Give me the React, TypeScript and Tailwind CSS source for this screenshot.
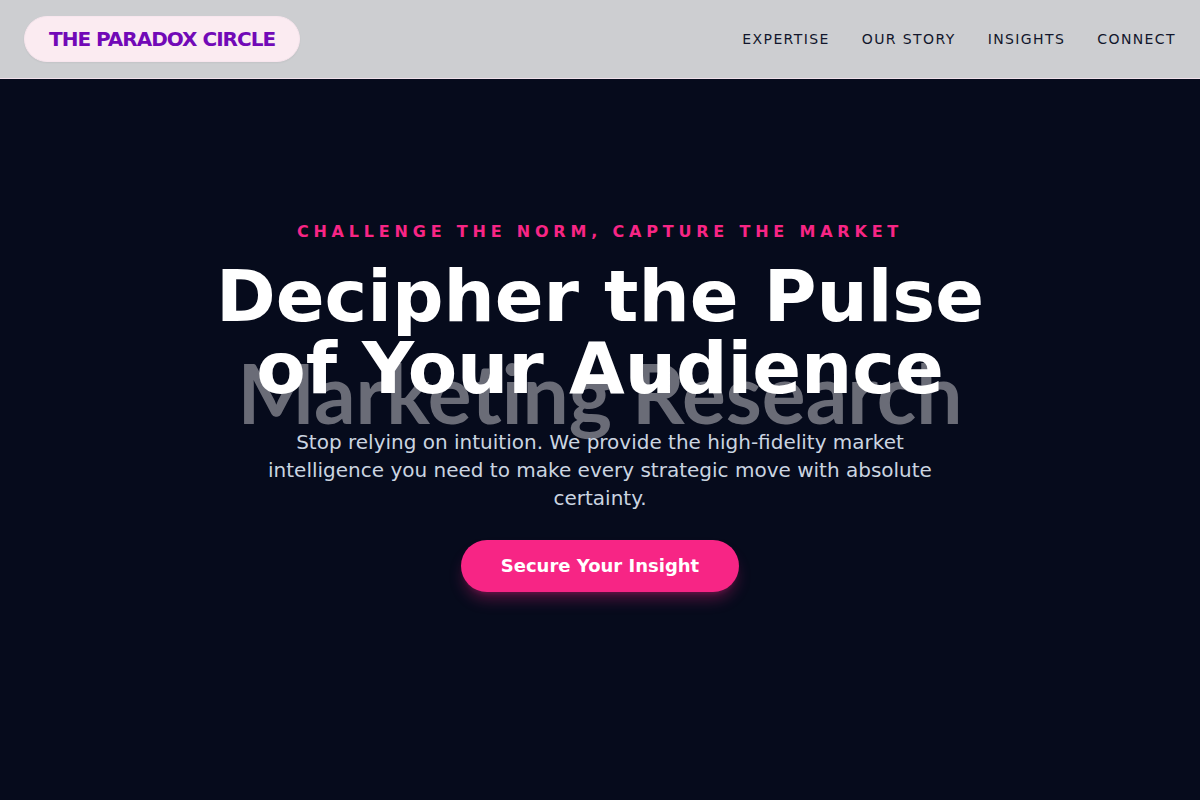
const links = ['Expertise', 'Our Story', 'Insights', 'Connect'];

export default function App() {
  return (
    <div className="flex min-h-screen flex-col bg-[#060b1c] font-['DejaVu_Sans',sans-serif]">
      <header className="flex items-center justify-between border-b border-[#f0e0ea] bg-[#cdced1] px-6 py-4">
        <a
          href="#home"
          className="rounded-full border border-[#f8e6ee] bg-[#fbebf1] px-6 py-2 text-xl font-bold tracking-tighter text-[#7209b7] uppercase shadow-xs"
        >
          The Paradox Circle
        </a>
        <nav className="flex gap-8">
          {links.map((label) => (
            <a key={label} href="#contact" className="text-sm tracking-widest text-[#12162c] uppercase">
              {label}
            </a>
          ))}
        </nav>
      </header>
      <main className="relative isolate flex grow flex-col items-center justify-center px-6 pb-17 text-center">
        <div
          aria-hidden="true"
          className="absolute inset-0 -z-10 flex items-center justify-center pb-24 font-['Lato',sans-serif] text-[82px] leading-none font-bold text-[#6a6c77] [font-variant-ligatures:none]"
        >
          Marketing Research
        </div>
        <p className="mb-4 text-base leading-6 font-bold tracking-[0.3em] text-[#f72585] uppercase">
          Challenge the Norm, Capture the Market
        </p>
        <h1 className="mb-6 max-w-4xl text-7xl leading-none font-bold text-white">
          Decipher the Pulse
          <br />
          of Your Audience
        </h1>
        <p className="mb-7 max-w-2xl text-xl leading-7 text-[#cbd5e1]">
          Stop relying on intuition. We provide the high-fidelity market intelligence you need to make every strategic
          move with absolute certainty.
        </p>
        <a
          href="#insight"
          className="rounded-full bg-[#f72585] px-10 py-3 text-lg leading-7 font-bold text-white shadow-[0_10px_15px_-3px_rgba(247,37,133,0.3),0_4px_6px_-4px_rgba(247,37,133,0.3)]"
        >
          Secure Your Insight
        </a>
      </main>
    </div>
  );
}
